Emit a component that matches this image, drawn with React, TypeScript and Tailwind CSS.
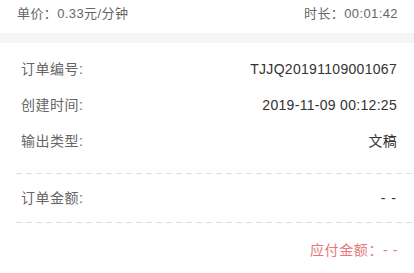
const InfoRow = ({ label, value }: { label: string; value: string }) => (
  <div className="flex h-[36px] items-center justify-between pl-[21px] pr-[17px] text-[14px]">
    <span className="text-[#666] tracking-[0.5px]">{label}</span>
    <span className="text-[#333] tracking-[0.3px]">{value}</span>
  </div>
);

const Dashed = () => (
  <div className="ml-[16px] h-px bg-[linear-gradient(to_right,#e0e0e0_6px,transparent_6px)] bg-[length:10px_1px]" />
);

export default function App() {
  return (
    <div className="w-[414px] h-[273px] bg-white overflow-hidden font-['Liberation_Sans','Noto_Sans_CJK_SC',sans-serif]">
      {/* 计费信息 */}
      <div className="flex h-[33px] items-center justify-between pb-[5px] pl-[17px] pr-[16px] text-[13px] tracking-[0.4px] text-[#666]">
        <span>单价：0.33元/分钟</span>
        <span>时长：00:01:42</span>
      </div>

      <div className="h-[10px] bg-[#f5f5f5]" />

      {/* 订单信息 */}
      <div className="pt-[8px]">
        <InfoRow label="订单编号:" value="TJJQ20191109001067" />
        <InfoRow label="创建时间:" value="2019-11-09 00:12:25" />
        <InfoRow label="输出类型:" value="文稿" />
      </div>

      <div className="mt-[14px]">
        <Dashed />
      </div>

      <div className="flex h-[48px] items-center justify-between pl-[21px] pr-[17px] text-[14px]">
        <span className="text-[#666] tracking-[0.5px]">订单金额:</span>
        <span className="text-[#333] tracking-[1px]">- -</span>
      </div>

      <Dashed />

      <div className="flex h-[54px] items-center justify-end pr-[16px] text-[14px] tracking-[0.6px] text-[#e57878]">
        <span>应付金额：- -</span>
      </div>
    </div>
  );
}
